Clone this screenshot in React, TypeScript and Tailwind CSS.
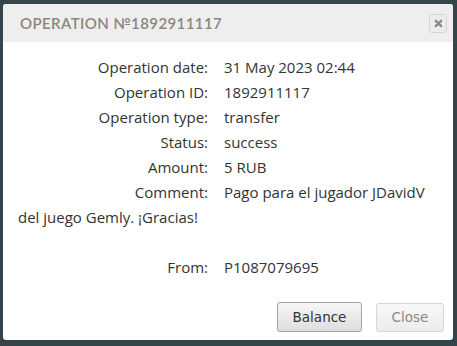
import React from "react"

const rows: [string, string][] = [
  ["Operation date:", "31 May 2023 02:44"],
  ["Operation ID:", "1892911117"],
  ["Operation type:", "transfer"],
  ["Status:", "success"],
  ["Amount:", "5 RUB"],
  ["Comment:", "Pago para el jugador JDavidV del juego Gemly. ¡Gracias!"],
]

function Row({ label, value }: { label: string; value: string }) {
  return (
    <div className="leading-[24.5px] mb-[0.5px]">
      <span className="inline-block w-[206px] pr-[16px] text-right">{label}</span>
      {value}
    </div>
  )
}

export default function App() {
  return (
    <div className="w-[457px] h-[346px] bg-[#35434b] pt-[4px] pl-[3px]">
      <div className="w-[450px] h-[336px] bg-white rounded-[3px] overflow-hidden flex flex-col">
        <div className="h-[38px] bg-[#eeeeee] flex items-center justify-between pl-[17px] pr-[6px]">
          <span
            className="text-[15px] tracking-[0.4px] text-[#8c857b] font-semibold"
            style={{ fontFamily: "Lato, sans-serif" }}
          >
            OPERATION №1892911117
          </span>
          <button className="w-[18px] h-[19px] mt-[1px] border border-[#d4d4d4] rounded-[3px] bg-[#ececec] flex items-center justify-center">
            <svg width="9" height="9" viewBox="0 0 10 10">
              <path d="M2 2L8 8M8 2L2 8" stroke="#8a8a8a" strokeWidth="2.6" strokeLinecap="round" />
            </svg>
          </button>
        </div>
        <div
          className="flex-1 pl-[15px] pr-[12px] pt-[13px] text-[15px] text-[#333333]"
          style={{ fontFamily: "'Open Sans', sans-serif" }}
        >
          {rows.map(([l, v]) => (
            <Row key={l} label={l} value={v} />
          ))}
          <div className="mt-[26px]">
            <Row label="From:" value="P1087079695" />
          </div>
        </div>
        <div
          className="flex justify-end gap-[14px] pr-[9px] pb-[8px] text-[13.5px]"
          style={{ fontFamily: "'DejaVu Sans', Verdana, sans-serif" }}
        >
          <button className="w-[85px] h-[30px] border border-[#a3a3a3] rounded-[3px] bg-gradient-to-b from-[#f6f6f6] to-[#dedede] text-[#333]">
            Balance
          </button>
          <button className="w-[68px] h-[29px] mt-[1px] border border-[#d6d6d6] rounded-[3px] bg-gradient-to-b from-[#f8f8f8] to-[#ececec] text-[#8a8a8a]">
            Close
          </button>
        </div>
      </div>
    </div>
  )
}
